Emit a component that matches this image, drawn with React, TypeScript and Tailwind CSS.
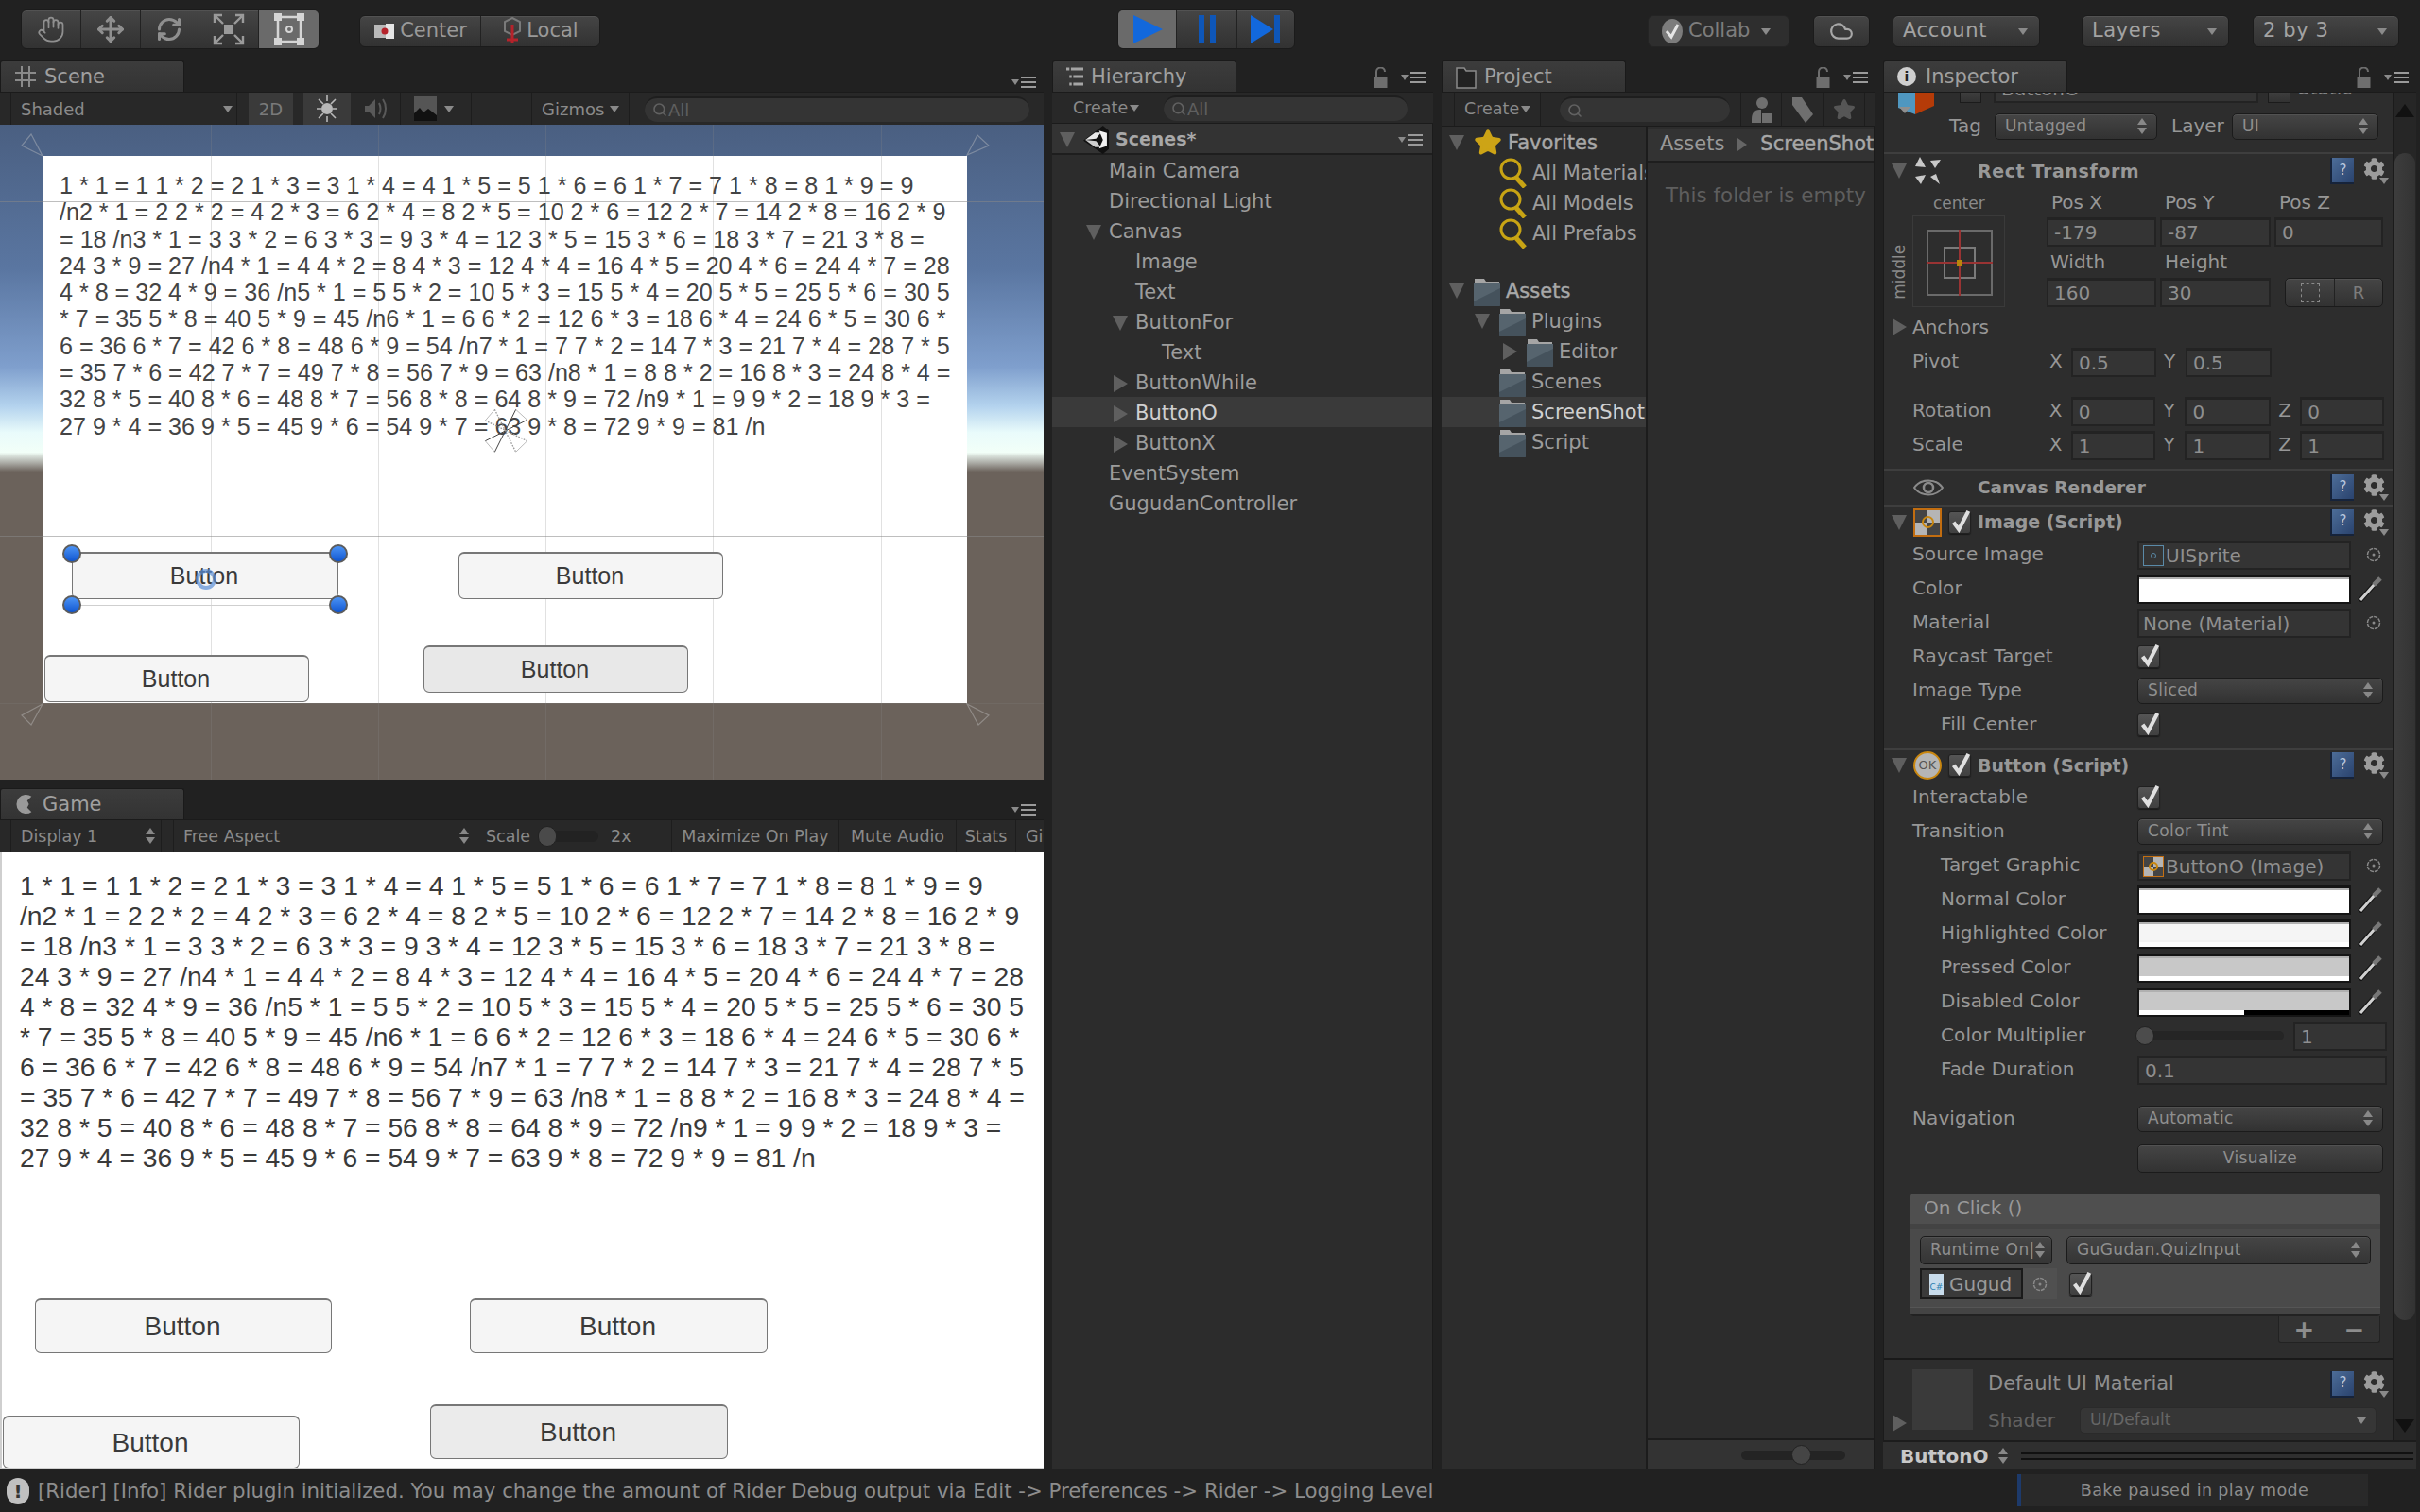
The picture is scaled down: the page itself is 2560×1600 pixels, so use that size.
import { ReactNode } from "react";
import { Cloud, Hand, Move, RefreshCw, Search, Star } from "lucide-react";
import { FaCog } from "react-icons/fa";

const LINES = [
  "1 * 1 = 1 1 * 2 = 2 1 * 3 = 3 1 * 4 = 4 1 * 5 = 5 1 * 6 = 6 1 * 7 = 7 1 * 8 = 8 1 * 9 = 9",
  "/n2 * 1 = 2 2 * 2 = 4 2 * 3 = 6 2 * 4 = 8 2 * 5 = 10 2 * 6 = 12 2 * 7 = 14 2 * 8 = 16 2 * 9",
  "= 18 /n3 * 1 = 3 3 * 2 = 6 3 * 3 = 9 3 * 4 = 12 3 * 5 = 15 3 * 6 = 18 3 * 7 = 21 3 * 8 =",
  "24 3 * 9 = 27 /n4 * 1 = 4 4 * 2 = 8 4 * 3 = 12 4 * 4 = 16 4 * 5 = 20 4 * 6 = 24 4 * 7 = 28",
  "4 * 8 = 32 4 * 9 = 36 /n5 * 1 = 5 5 * 2 = 10 5 * 3 = 15 5 * 4 = 20 5 * 5 = 25 5 * 6 = 30 5",
  "* 7 = 35 5 * 8 = 40 5 * 9 = 45 /n6 * 1 = 6 6 * 2 = 12 6 * 3 = 18 6 * 4 = 24 6 * 5 = 30 6 *",
  "6 = 36 6 * 7 = 42 6 * 8 = 48 6 * 9 = 54 /n7 * 1 = 7 7 * 2 = 14 7 * 3 = 21 7 * 4 = 28 7 * 5",
  "= 35 7 * 6 = 42 7 * 7 = 49 7 * 8 = 56 7 * 9 = 63 /n8 * 1 = 8 8 * 2 = 16 8 * 3 = 24 8 * 4 =",
  "32 8 * 5 = 40 8 * 6 = 48 8 * 7 = 56 8 * 8 = 64 8 * 9 = 72 /n9 * 1 = 9 9 * 2 = 18 9 * 3 =",
  "27 9 * 4 = 36 9 * 5 = 45 9 * 6 = 54 9 * 7 = 63 9 * 8 = 72 9 * 9 = 81 /n",
];

const btn = "bg-gradient-to-b from-[#454545] to-[#323232] border border-[#1b1b1b] shadow-[inset_0_1px_0_#525252]";
const field = "bg-[#343434] border-2 border-t-[3px] border-[#232323] text-[#8f8f8f] flex items-center";
const label = "text-[20px] text-[#979797] pb-[2px]";

function ArrowDown({ className = "" }: { className?: string }) {
  return (
    <svg width="16" height="18" viewBox="0 0 16 18" className={className}>
      <polygon points="0,1 16,1 8,17" fill="#5f5f5f" />
    </svg>
  );
}

function ArrowRight({ className = "" }: { className?: string }) {
  return (
    <svg width="16" height="20" viewBox="0 0 16 20" className={className}>
      <polygon points="1,1 16,10 1,19" fill="#5f5f5f" />
    </svg>
  );
}

function Caret() {
  return (
    <svg width="10" height="7" viewBox="0 0 10 7">
      <polygon points="0,0 10,0 5,7" fill="#8a8a8a" />
    </svg>
  );
}

function UpDown() {
  return (
    <svg width="10" height="18" viewBox="0 0 10 18" className="shrink-0">
      <polygon points="5,0 10,7 0,7" fill="#888" />
      <polygon points="0,10 10,10 5,17" fill="#888" />
    </svg>
  );
}

function MenuIcon() {
  return (
    <svg width="26" height="12" viewBox="0 0 26 12">
      <polygon points="0,3 8,3 4,9" fill="#8a8a8a" />
      <rect x="10" y="0" width="16" height="2" fill="#9a9a9a" />
      <rect x="10" y="5" width="16" height="2" fill="#9a9a9a" />
      <rect x="10" y="10" width="16" height="2" fill="#9a9a9a" />
    </svg>
  );
}

function LockIcon() {
  return (
    <svg width="15" height="22" viewBox="0 0 15 22">
      <path d="M3 10V5a4.5 4.5 0 0 1 9 0" fill="none" stroke="#6e6e6e" strokeWidth="2" />
      <rect x="0.5" y="10" width="14" height="12" fill="#6e6e6e" />
    </svg>
  );
}

function Folder({ className = "" }: { className?: string }) {
  return (
    <svg width="28" height="34" viewBox="0 0 28 34" className={className}>
      <path d="M1 4h10l2 3h14v5H1z" fill="#a5a5a5" />
      <rect x="0" y="9" width="28" height="25" rx="2" fill="#45525c" />
      <path d="M0 9h28v5L0 28z" fill="#56646e" />
    </svg>
  );
}

function GoldSearch() {
  return (
    <svg width="29" height="34" viewBox="0 0 29 34" className="shrink-0">
      <circle cx="12" cy="13" r="10" fill="none" stroke="#c8a414" strokeWidth="3" />
      <line x1="18" y1="22" x2="27" y2="32" stroke="#c8a414" strokeWidth="5" />
    </svg>
  );
}

function Unity() {
  return (
    <svg width="27" height="30" viewBox="0 0 26 46" preserveAspectRatio="none" className="shrink-0">
      <polygon points="20,0 26,8 26,38 20,46 0,24" fill="#111" />
      <polygon points="2,23 12,11 18,11 13,21" fill="#e8e8e8" />
      <polygon points="2,23 12,35 18,35 13,25" fill="#cfcfcf" />
      <polygon points="16,8 24,12 24,33 16,37 20,23" fill="#f2f2f2" />
    </svg>
  );
}

function Picker() {
  return (
    <svg width="26" height="28" viewBox="0 0 26 28" className="shrink-0">
      <line x1="2" y1="27" x2="18" y2="9" stroke="#111" strokeWidth="5" />
      <line x1="3" y1="26" x2="18" y2="9" stroke="#d0d0d0" strokeWidth="3" />
      <line x1="17" y1="10" x2="24" y2="3" stroke="#777" strokeWidth="5" />
    </svg>
  );
}

function Target() {
  return (
    <svg width="16" height="16" viewBox="0 0 16 16" className="shrink-0">
      <circle cx="8" cy="8" r="6.5" fill="none" stroke="#8a8a8a" strokeWidth="1.5" strokeDasharray="4 1" />
      <circle cx="8" cy="8" r="1.5" fill="#8a8a8a" />
    </svg>
  );
}

function Check({ className = "" }: { className?: string }) {
  return (
    <div className={`bg-gradient-to-b from-[#555] to-[#404040] border border-[#202020] shadow-[0_1px_1px_#1a1a1a] w-[24px] h-[24px] rounded-[3px] relative shrink-0 ${className}`}>
      <svg width="24" height="26" viewBox="0 0 26 28" className="absolute -top-[4px] left-0">
        <path d="M5 16l6 8L22 3" fill="none" stroke="#e0e0e0" strokeWidth="4.5" />
      </svg>
    </div>
  );
}

function CompIcons() {
  return (
    <div className="ml-auto flex items-center gap-[10px]">
      <div className="w-[25px] h-[28px] bg-gradient-to-br from-[#4d6d98] to-[#2a436e] border-l-2 border-b-2 border-[#16233a] text-[#b9c8de] text-[15px] flex items-center justify-center">?</div>
      <div className="relative w-[27px] h-[28px]">
        <FaCog size={23} color="#9c9c9c" />
        <span className="absolute right-0 bottom-0"><Caret /></span>
      </div>
    </div>
  );
}

function CheckerIcon({ size }: { size: "big" | "small" }) {
  return (
    <div className={`relative shrink-0 grid grid-cols-2 border-orange-400/70 ${size === "big" ? "w-[30px] h-[30px] border-2" : "w-[22px] h-[22px] border"}`}>
      <div className="bg-[#444]" />
      <div className="bg-[#b5b5b5]" />
      <div className="bg-[#b5b5b5]" />
      <div className="bg-[#444]" />
      <div className={`absolute inset-0 m-auto rounded-full border-2 border-[#c98710] ${size === "big" ? "w-[13px] h-[13px]" : "w-[10px] h-[10px]"}`} />
    </div>
  );
}

function TabStrip({ label, icon, width, extra }: { label: string; icon: ReactNode; width: string; extra?: ReactNode }) {
  return (
    <div className="h-[33px] flex items-end justify-between shrink-0">
      <div className={`${width} h-[33px] bg-gradient-to-b from-[#3c3c3c] to-[#333] border-t border-x border-[#1a1a1a] rounded-t-[3px] flex items-center pl-[14px] gap-[8px] text-[21px] text-[#a0a0a0]`}>
        {icon}
        <span className="pt-[2px]">{label}</span>
      </div>
      <div className="flex items-center gap-[14px] pr-[8px] pb-[4px]">
        {extra}
        <MenuIcon />
      </div>
    </div>
  );
}

function ToolButton({ children, active }: { children: ReactNode; active?: boolean }) {
  return (
    <div className={`w-[63px] h-full flex items-center justify-center border-r border-[#222] last:border-r-0 ${active ? "bg-[#6a6a6a]" : ""}`}>
      {children}
    </div>
  );
}

function TopDrop({ label, width, margin }: { label: string; width: string; margin: string }) {
  return (
    <div className={`${btn} ${width} ${margin} h-[34px] rounded-[6px] flex items-center justify-between pl-[10px] pr-[12px] text-[21px] text-[#a3a3a3] tracking-[0.6px]`}>
      <span>{label}</span>
      <Caret />
    </div>
  );
}

function Toolbar() {
  return (
    <div className="h-[64px] shrink-0 flex items-start bg-[#212121]">
      <div className={`${btn} ml-[22px] mt-[10px] w-[316px] h-[42px] rounded-[6px] flex overflow-hidden`}>
        <ToolButton><Hand size={30} strokeWidth={1.4} color="#8f8f8f" /></ToolButton>
        <ToolButton><Move size={30} strokeWidth={2.4} color="#8f8f8f" /></ToolButton>
        <ToolButton><RefreshCw size={28} strokeWidth={2.6} color="#8f8f8f" /></ToolButton>
        <ToolButton>
          <svg width="34" height="34" viewBox="0 0 34 34">
            <rect x="12" y="12" width="10" height="10" fill="#9a9a9a" />
            <path d="M2 10V2h8M24 2h8v8M32 24v8h-8M10 32H2v-8M3 3l8 8M31 3l-8 8M31 31l-8-8M3 31l8-8" fill="none" stroke="#9a9a9a" strokeWidth="2.4" />
          </svg>
        </ToolButton>
        <ToolButton active>
          <svg width="36" height="36" viewBox="0 0 36 36">
            <rect x="6" y="5" width="24" height="26" fill="none" stroke="#d5d5d5" strokeWidth="2.5" />
            <rect x="2" y="1" width="8" height="8" fill="#d5d5d5" />
            <rect x="26" y="1" width="8" height="8" fill="#d5d5d5" />
            <rect x="2" y="27" width="8" height="8" fill="#d5d5d5" />
            <rect x="26" y="27" width="8" height="8" fill="#d5d5d5" />
            <circle cx="18" cy="18" r="3" fill="none" stroke="#d5d5d5" strokeWidth="2" />
          </svg>
        </ToolButton>
      </div>
      <div className={`${btn} ml-[42px] mt-[16px] w-[255px] h-[34px] rounded-[6px] flex text-[21px] text-[#999]`}>
        <div className="w-[128px] flex items-center justify-center gap-[4px] border-r border-[#222]">
          <svg width="24" height="18" viewBox="0 0 24 18">
            <rect x="1" y="2" width="12" height="14" fill="#b9b9b9" />
            <rect x="13" y="1" width="9" height="16" fill="#e6e6e6" />
            <circle cx="12" cy="9" r="3.5" fill="#b5232b" />
          </svg>
          <span>Center</span>
        </div>
        <div className="flex-1 flex items-center justify-center gap-[4px]">
          <svg width="22" height="30" viewBox="0 0 22 30">
            <polygon points="11,1 19,5 19,15 11,19 3,15 3,5" fill="none" stroke="#7a7a7a" strokeWidth="2" />
            <line x1="11" y1="8" x2="11" y2="27" stroke="#b5232b" strokeWidth="3" />
            <line x1="5" y1="24" x2="17" y2="24" stroke="#b5232b" strokeWidth="3" />
          </svg>
          <span>Local</span>
        </div>
      </div>
      <div className={`${btn} ml-[547px] mt-[10px] w-[188px] h-[42px] rounded-[6px] flex overflow-hidden`}>
        <div className="w-[62px] bg-[#6a6a6a] border-r border-[#222] flex items-center justify-center">
          <svg width="32" height="30" viewBox="0 0 32 30"><polygon points="1,0 32,15 1,30" fill="#1268dc" /></svg>
        </div>
        <div className="w-[64px] border-r border-[#222] flex items-center justify-center gap-[6px]">
          <div className="w-[6px] h-[30px] bg-[#0e56b8]" />
          <div className="w-[6px] h-[30px] bg-[#0e56b8]" />
        </div>
        <div className="flex-1 flex items-center justify-center">
          <svg width="32" height="30" viewBox="0 0 32 30">
            <polygon points="0,0 24,15 0,30" fill="#1268dc" />
            <rect x="25" y="0" width="6" height="30" fill="#0e56b8" />
          </svg>
        </div>
      </div>
      <div className="ml-[373px] mt-[16px] w-[150px] h-[34px] rounded-[6px] bg-[#2e2e2e] border border-[#242424] flex items-center pl-[14px] gap-[6px] text-[21px] text-[#7d7d7d]">
        <svg width="22" height="26" viewBox="0 0 22 26">
          <ellipse cx="11" cy="13" rx="11" ry="13" fill="#7c7c7c" />
          <path d="M5 13l5 6 7-13" fill="none" stroke="#e5e5e5" strokeWidth="3" />
        </svg>
        <span>Collab</span>
        <span className="ml-[6px]"><Caret /></span>
      </div>
      <div className={`${btn} ml-[25px] mt-[16px] w-[60px] h-[34px] rounded-[6px] flex items-center justify-center`}>
        <Cloud size={26} strokeWidth={2} color="#a8a8a8" />
      </div>
      <TopDrop label="Account" width="w-[156px]" margin="ml-[24px] mt-[16px]" />
      <TopDrop label="Layers" width="w-[156px]" margin="ml-[44px] mt-[16px]" />
      <TopDrop label="2 by 3" width="w-[155px]" margin="ml-[25px] mt-[16px]" />
    </div>
  );
}

function SearchPill({ label, width }: { label: string; width: string }) {
  return (
    <div className={`${width} h-[27px] rounded-full bg-[#343434] border-t-2 border-[#1e1e1e] flex items-center pl-[8px] gap-[1px] text-[18px] text-[#5f5f5f]`}>
      <Search size={16} color="#616161" strokeWidth={2.4} />
      {label && <span>{label}</span>}
    </div>
  );
}

function BigText({ size }: { size: "scene" | "game" }) {
  return (
    <div className={`font-['Liberation_Sans',Arial,sans-serif] whitespace-nowrap ${size === "scene" ? "text-[25.1px] leading-[28.3px] text-[#444]" : "text-[28.3px] leading-[32px] text-[#3a3a3a]"}`}>
      {LINES.map((l) => <div key={l}>{l}</div>)}
    </div>
  );
}

function UiButton({ className }: { className: string }) {
  return (
    <div className={`absolute border border-[#777] border-t-2 rounded-[6px] flex items-center justify-center font-['Liberation_Sans',Arial,sans-serif] text-[#3a3a3a] pr-[2px] ${className}`}>
      Button
    </div>
  );
}

function Corner({ className, points }: { className: string; points: string }) {
  return (
    <svg width="27" height="26" viewBox="0 0 27 26" className={`absolute ${className}`}>
      <polygon points={points} fill="none" stroke="#c8c8c8" strokeOpacity="0.4" strokeWidth="1.2" />
    </svg>
  );
}

function Handle({ className }: { className: string }) {
  return <div className={`absolute w-[20px] h-[20px] rounded-full bg-gradient-to-b from-[#4b93f5] to-[#0f55d0] border-2 border-[#5c5c5c] ${className}`} />;
}

function SceneView() {
  return (
    <div className="relative h-[693px] overflow-hidden bg-[linear-gradient(to_bottom,#4a5f81_0%,#5a76a1_22%,#7f9fcd_37%,#b4d3ee_43%,#e9fbfb_47%,#f2fff8_50%,#a8a8a2_51.7%,#6b625b_53%,#6b625b_100%)]">
      <div className="absolute left-[45px] top-[33px] w-[978px] h-[579px] bg-white" />
      {[45, 223, 400, 577, 754, 932].map((x) => (
        <div key={x} className="absolute top-0 bottom-0 w-px bg-[#888]/25" style={{ left: x }} />
      ))}
      {[81, 435].map((y) => (
        <div key={y} className="absolute left-0 right-0 h-px bg-[#888]/55" style={{ top: y }} />
      ))}
      {[258, 612].map((y) => (
        <div key={y} className="absolute left-0 right-0 h-px bg-[#888]/20" style={{ top: y }} />
      ))}
      <div className="absolute left-[63px] top-[50px]"><BigText size="scene" /></div>
      <UiButton className="left-[76px] top-[452px] w-[282px] h-[50px] text-[25px] bg-[#f5f5f5]" />
      <UiButton className="left-[485px] top-[452px] w-[280px] h-[50px] text-[25px] bg-[#f5f5f5]" />
      <UiButton className="left-[47px] top-[561px] w-[280px] h-[50px] text-[25px] bg-[#f5f5f5]" />
      <UiButton className="left-[448px] top-[551px] w-[280px] h-[50px] text-[25px] bg-[#e8e8e8]" />
      <div className="absolute left-[76px] top-[508px] w-[282px] h-[1px] bg-[#cfcfcf]" />
      <Handle className="left-[66px] top-[444px]" />
      <Handle className="left-[348px] top-[444px]" />
      <Handle className="left-[66px] top-[498px]" />
      <Handle className="left-[348px] top-[498px]" />
      <div className="absolute left-[207px] top-[470px] w-[22px] h-[22px] rounded-full border-[4px] border-[#5b8fd6]/70" />
      <svg width="120" height="80" viewBox="0 0 360 240" className="absolute left-[480px] top-[278px]">
        <path d="M100 170L233 103M130 205L197 70" stroke="#444" strokeWidth="3" />
        <path d="M100 105L233 170M130 70L197 205" stroke="#9a9a9a" strokeWidth="4" strokeDasharray="5 4" />
        <path d="M130 70L100 105M197 70L233 103M100 170L130 205M197 205L233 170" stroke="#777" strokeWidth="1.5" />
      </svg>
      <Corner className="left-[22px] top-[9px]" points="11,1 1,13 23,24" />
      <Corner className="left-[1021px] top-[9px]" points="2,23 13,2 25,13" />
      <Corner className="left-[22px] top-[611px]" points="23,2 1,14 11,24" />
      <Corner className="left-[1021px] top-[611px]" points="2,2 25,14 14,24" />
    </div>
  );
}

function GameView() {
  return (
    <div className="relative flex-1 bg-white border-l-2 border-b-2 border-[#cfcfcf] pl-[19px] pt-[19px] overflow-hidden">
      <BigText size="game" />
      <UiButton className="left-[35px] top-[472px] w-[314px] h-[58px] text-[28px] bg-[#f5f5f5]" />
      <UiButton className="left-[495px] top-[472px] w-[315px] h-[58px] text-[28px] bg-[#f5f5f5]" />
      <UiButton className="left-[1px] top-[596px] w-[314px] h-[56px] text-[28px] bg-[#f5f5f5]" />
      <UiButton className="left-[453px] top-[584px] w-[315px] h-[58px] text-[28px] bg-[#ebebeb]" />
    </div>
  );
}

function LeftColumn() {
  return (
    <div className="w-[1104px] shrink-0 flex flex-col">
      <TabStrip
        label="Scene"
        width="w-[195px]"
        icon={
          <svg width="24" height="24" viewBox="0 0 24 24">
            <path d="M8 1v22M16 1v22M1 8h22M1 16h22" stroke="#8a8a8a" strokeWidth="2" />
          </svg>
        }
      />
      <div className="h-[35px] shrink-0 bg-[#282828] border-t border-[#1b1b1b] flex items-center text-[18px] text-[#8a8a8a]">
        <div className="ml-[11px] w-[240px] h-full border-x border-[#1d1d1d] flex items-center justify-between pl-[10px] pr-[4px]"><span>Shaded</span><Caret /></div>
        <div className="ml-[12px] w-[47px] h-full bg-[#3a3a3a] flex items-center justify-center text-[#7a7a7a]">2D</div>
        <div className="ml-[11px] w-[50px] h-full bg-[#3a3a3a] flex items-center justify-center">
          <svg width="26" height="30" viewBox="0 0 26 30">
            <circle cx="13" cy="15" r="6" fill="#b8b8b8" />
            <path d="M13 1v6M13 23v6M2 15h5M19 15h5M4 5l5 5M22 5l-5 5M4 25l5-5M22 25l-5-5" stroke="#b8b8b8" strokeWidth="1.6" />
          </svg>
        </div>
        <div className="w-[53px] h-full flex items-center justify-center border-r border-[#1d1d1d]">
          <svg width="26" height="28" viewBox="0 0 26 28">
            <path d="M2 11h4l7-7v20l-7-7H2z" fill="#595959" />
            <path d="M17 8c2 4 2 8 0 12M21 4c4 6 4 14 0 20" fill="none" stroke="#595959" strokeWidth="2" />
          </svg>
        </div>
        <div className="w-[75px] h-full flex items-center gap-[8px] pl-[14px] border-r border-[#1d1d1d]">
          <svg width="24" height="26" viewBox="0 0 24 26">
            <rect width="24" height="26" fill="#555" />
            <path d="M0 26V18l6-6 4 5 5-4 9 7v6z" fill="#111" />
          </svg>
          <Caret />
        </div>
        <div className="ml-[63px] w-[104px] h-full flex items-center justify-between px-[10px] border-x border-[#1d1d1d]"><span>Gizmos</span><Caret /></div>
        <div className="ml-[16px]"><SearchPill label="All" width="w-[407px]" /></div>
      </div>
      <SceneView />
      <div className="h-[9px] shrink-0" />
      <TabStrip
        label="Game"
        width="w-[195px]"
        icon={
          <svg width="22" height="24" viewBox="0 0 24 24">
            <path d="M20 3a11 11 0 1 0 0 18l-5-5 2-4-2-4z" fill="#9a9a9a" />
          </svg>
        }
      />
      <div className="h-[35px] shrink-0 bg-[#282828] border-t border-[#1b1b1b] flex items-center text-[17.5px] text-[#8a8a8a]">
        <div className="ml-[11px] w-[160px] h-full border-x border-[#1d1d1d] flex items-center justify-between pl-[10px] pr-[6px]"><span>Display 1</span><UpDown /></div>
        <div className="ml-[12px] w-[320px] h-full border-x border-[#1d1d1d] flex items-center justify-between pl-[10px] pr-[6px]"><span>Free Aspect</span><UpDown /></div>
        <div className="w-[207px] h-full flex items-center pl-[11px]">
          <span>Scale</span>
          <div className="relative ml-[10px] w-[62px] h-[12px] rounded-full bg-[#222]">
            <div className="absolute -left-[2px] -top-[5px] w-[20px] h-[22px] rounded-full bg-[#4a4a4a] border border-[#222]" />
          </div>
          <span className="ml-[13px]">2x</span>
        </div>
        <div className="w-[178px] h-full flex items-center justify-center border-x border-[#1d1d1d]">Maximize On Play</div>
        <div className="w-[124px] h-full flex items-center justify-center border-r border-[#1d1d1d]">Mute Audio</div>
        <div className="w-[63px] h-full flex items-center justify-center border-r border-[#1d1d1d]">Stats</div>
        <div className="flex-1 pl-[10px] overflow-hidden">Gi</div>
      </div>
      <GameView />
    </div>
  );
}

const HIER = [
  { name: "Main Camera", pad: "pl-[60px]" },
  { name: "Directional Light", pad: "pl-[60px]" },
  { name: "Canvas", pad: "pl-[60px]", arrow: "down" },
  { name: "Image", pad: "pl-[88px]" },
  { name: "Text", pad: "pl-[88px]" },
  { name: "ButtonFor", pad: "pl-[88px]", arrow: "down" },
  { name: "Text", pad: "pl-[116px]" },
  { name: "ButtonWhile", pad: "pl-[88px]", arrow: "right" },
  { name: "ButtonO", pad: "pl-[88px]", arrow: "right", active: true },
  { name: "ButtonX", pad: "pl-[88px]", arrow: "right" },
  { name: "EventSystem", pad: "pl-[60px]" },
  { name: "GugudanController", pad: "pl-[60px]" },
];

function Hierarchy() {
  return (
    <div className="w-[403px] ml-[9px] shrink-0 flex flex-col">
      <TabStrip
        label="Hierarchy"
        width="w-[195px]"
        extra={<LockIcon />}
        icon={
          <svg width="18" height="20" viewBox="0 0 22 20" preserveAspectRatio="none">
            <path d="M0 2h4M6 2h16M4 10h3M9 10h13M4 18h3M9 18h13" stroke="#a5a5a5" strokeWidth="3" />
          </svg>
        }
      />
      <div className="h-[34px] shrink-0 bg-[#282828] border-y border-[#1b1b1b] flex items-center text-[17.5px] text-[#8a8a8a]">
        <div className="ml-[11px] w-[92px] h-full flex items-center justify-between px-[10px] border-x border-[#1d1d1d]"><span>Create</span><Caret /></div>
        <div className="ml-[15px]"><SearchPill label="All" width="w-[258px]" /></div>
      </div>
      <div className="flex-1 bg-[#2c2c2c] border-r border-[#1b1b1b]">
        <div className="h-[33px] bg-[#333] border-b-2 border-[#1e1e1e] flex items-center pl-[8px] pt-[2px] text-[19px] text-[#a8a8a8]">
          <ArrowDown />
          <span className="ml-[9px]"><Unity /></span>
          <span className="ml-[7px] font-bold">Scenes*</span>
          <span className="ml-auto mr-[10px]"><MenuIcon /></span>
        </div>
        {HIER.map((r, i) => (
          <div key={i} className={`h-[32px] pt-[3px] flex items-center relative text-[21px] ${r.pad} ${r.active ? "bg-[#3a3a3a] text-[#d0d0d0]" : "text-[#9c9c9c]"}`}>
            {r.arrow === "down" && <ArrowDown className="-ml-[24px] mr-[8px]" />}
            {r.arrow === "right" && <ArrowRight className="-ml-[24px] mr-[8px]" />}
            {r.name}
          </div>
        ))}
      </div>
    </div>
  );
}

function TreeRow({ name, pad, icon, arrow, bold, active }: { name: string; pad: string; icon: ReactNode; arrow?: "down" | "right"; bold?: boolean; active?: boolean }) {
  return (
    <div className={`h-[32px] flex items-center text-[21px] whitespace-nowrap overflow-hidden ${pad} ${active ? "bg-[#3a3a3a] text-[#d0d0d0]" : "text-[#9c9c9c]"} ${bold ? "[-webkit-text-stroke:0.4px_#a8a8a8] text-[#a8a8a8]" : ""}`}>
      {arrow === "down" && <ArrowDown className="mr-[10px] shrink-0" />}
      {arrow === "right" && <ArrowRight className="mr-[10px] shrink-0" />}
      {icon}
      <span className="ml-[6px] pt-[2px]">{name}</span>
    </div>
  );
}

function Project() {
  return (
    <div className="w-[459px] ml-[9px] shrink-0 flex flex-col">
      <TabStrip
        label="Project"
        width="w-[195px]"
        extra={<LockIcon />}
        icon={
          <svg width="22" height="26" viewBox="0 0 22 26">
            <path d="M1 4h8l2 3h10v18H1z" fill="#222" stroke="#8a8a8a" strokeWidth="1.5" />
          </svg>
        }
      />
      <div className="h-[37px] shrink-0 bg-[#282828] border-y border-[#1b1b1b] flex items-center text-[17.5px] text-[#8a8a8a]">
        <div className="ml-[13px] w-[92px] h-full flex items-center justify-between px-[10px] border-x border-[#1d1d1d]"><span>Create</span><Caret /></div>
        <div className="ml-[20px]"><SearchPill label="" width="w-[180px]" /></div>
        <div className="ml-[11px] w-[44px] h-full flex items-center justify-center border-x border-[#1d1d1d]">
          <svg width="24" height="28" viewBox="0 0 24 28"><circle cx="13" cy="7" r="6" fill="#6f6f6f" /><path d="M2 24c0-9 5-10 10-10v14H2z" fill="#6f6f6f" /><rect x="13" y="18" width="10" height="10" fill="#6f6f6f" /></svg>
        </div>
        <div className="w-[44px] h-full flex items-center justify-center border-r border-[#1d1d1d]">
          <svg width="24" height="30" viewBox="0 0 24 30"><path d="M1 2h10l12 18-8 9L1 10z" fill="#6f6f6f" /></svg>
        </div>
        <div className="w-[44px] h-full flex items-center justify-center border-r border-[#1d1d1d]">
          <Star size={24} fill="#565656" color="#565656" />
        </div>
      </div>
      <div className="flex-1 flex bg-[#2c2c2c] border-r-2 border-[#1b1b1b] min-h-0">
        <div className="w-[218px] shrink-0 border-r-2 border-[#1c1c1c] pt-[1px] overflow-hidden">
          <TreeRow name="Favorites" pad="pl-[8px]" arrow="down" bold icon={<Star size={30} fill="#cda416" color="#cda416" className="shrink-0" />} />
          <TreeRow name="All Materials" pad="pl-[61px]" icon={<GoldSearch />} />
          <TreeRow name="All Models" pad="pl-[61px]" icon={<GoldSearch />} />
          <TreeRow name="All Prefabs" pad="pl-[61px]" icon={<GoldSearch />} />
          <div className="h-[29px]" />
          <TreeRow name="Assets" pad="pl-[8px]" arrow="down" bold icon={<Folder className="shrink-0" />} />
          <TreeRow name="Plugins" pad="pl-[35px]" arrow="down" icon={<Folder className="shrink-0" />} />
          <TreeRow name="Editor" pad="pl-[64px]" arrow="right" icon={<Folder className="shrink-0" />} />
          <TreeRow name="Scenes" pad="pl-[61px]" icon={<Folder className="shrink-0" />} />
          <TreeRow name="ScreenShot" pad="pl-[61px]" active icon={<Folder className="shrink-0" />} />
          <TreeRow name="Script" pad="pl-[61px]" icon={<Folder className="shrink-0" />} />
        </div>
        <div className="flex-1 flex flex-col min-w-0">
          <div className="h-[36px] mt-[2px] shrink-0 bg-[#333] border-b-2 border-[#1e1e1e] flex items-center pl-[13px] gap-[14px] text-[21px] text-[#999] whitespace-nowrap overflow-hidden">
            <span>Assets</span>
            <svg width="10" height="14" viewBox="0 0 10 14" className="shrink-0"><polygon points="0,0 10,7 0,14" fill="#666" /></svg>
            <span className="text-[#a8a8a8] [-webkit-text-stroke:0.4px_#a8a8a8]">ScreenShot</span>
          </div>
          <div className="flex-1 pl-[19px] pt-[19px] text-[21.4px] text-[#5e5e5e] whitespace-nowrap overflow-hidden">This folder is empty</div>
          <div className="h-[33px] shrink-0 bg-[#333] border-t-2 border-[#1c1c1c] pl-[99px] flex items-center">
            <div className="relative w-[110px] h-[10px] rounded-full bg-[#242424]">
              <div className="absolute left-[53px] -top-[6px] w-[21px] h-[21px] rounded-full bg-[#454545] border border-[#222]" />
            </div>
          </div>
        </div>
      </div>
    </div>
  );
}

function Dropdown({ label, className = "" }: { label: string; className?: string }) {
  return (
    <div className={`${btn} h-[28px] rounded-[5px] flex items-center justify-between pl-[10px] pr-[10px] text-[17px] text-[#8f8f8f] tracking-[0.4px] whitespace-nowrap overflow-hidden ${className}`}>
      <span>{label}</span>
      <UpDown />
    </div>
  );
}

function Row({ label: text, indent, children, className = "" }: { label: string; indent?: boolean; children?: ReactNode; className?: string }) {
  return (
    <div className={`h-[36px] shrink-0 flex items-center ${className}`}>
      <div className={`w-[268px] shrink-0 ${label} tracking-[0.1px] whitespace-nowrap ${indent ? "pl-[60px]" : "pl-[30px]"}`}>{text}</div>
      {children}
    </div>
  );
}

function ObjField({ label, icon }: { label: string; icon?: ReactNode }) {
  return (
    <>
      <div className={`${field} w-[226px] h-[31px] pl-[4px] gap-[2px] text-[20px] whitespace-nowrap overflow-hidden`}>
        {icon}
        <span>{label}</span>
      </div>
      <span className="ml-[16px]"><Target /></span>
    </>
  );
}

function ColorField({ fill, bottom }: { fill: string; bottom?: ReactNode }) {
  return (
    <>
      <div className={`w-[226px] h-[31px] border-2 border-t-[3px] border-[#151515] relative overflow-hidden ${fill}`}>
        <div className="absolute top-0 left-0 right-0 h-[2px] bg-[#b0b0b0]" />
        {bottom ?? <div className="absolute bottom-0 left-0 right-0 h-[5px] bg-white" />}
      </div>
      <span className="ml-[7px]"><Picker /></span>
    </>
  );
}

function Num({ value, className }: { value: string; className: string }) {
  return <div className={`${field} ${className} h-[31px] pl-[6px] text-[20px]`}>{value}</div>;
}

function Axis({ label: text, value, className }: { label: string; value: string; className: string }) {
  return (
    <div className={`flex items-center ${className}`}>
      <span className={`w-[26px] pl-[3px] ${label}`}>{text}</span>
      <Num value={value} className="flex-1" />
    </div>
  );
}

function CompHeader({ title, icon, check, className = "", titleClass = "" }: { title: string; icon: ReactNode; check?: boolean; className?: string; titleClass?: string }) {
  return (
    <div className={`flex items-center pl-[8px] pr-[4px] shrink-0 ${className}`}>
      <ArrowDown className="mr-[7px] shrink-0" />
      <div className="w-[30px] shrink-0 flex justify-center">{icon}</div>
      {check && <Check className="ml-[7px]" />}
      <span className={`${check ? "ml-[7px]" : "ml-[38px]"} text-[19px] font-bold text-[#989898] whitespace-nowrap ${titleClass}`}>{title}</span>
      <CompIcons />
    </div>
  );
}

function Divider() {
  return <div className="h-[2px] shrink-0 bg-[#3e3e3e]" />;
}

function RectTransform() {
  return (
    <>
      <CompHeader
        title="Rect Transform"
        titleClass="tracking-[0.6px]"
        className="h-[36px]"
        icon={
          <svg width="30" height="32" viewBox="0 0 30 30">
            <path d="M7 0L2 10L13 11zM29 3L18 4L23 12zM2 21L13 19L8 29zM18 21L24 18L28 29z" fill="#c8c8c8" />
          </svg>
        }
      />
      <div className="flex h-[128px] shrink-0">
        <div className="relative w-[172px] shrink-0">
          <div className="pl-[52px] pt-[4px] h-[29px] text-[17px] text-[#8a8a8a]">center</div>
          <div className="relative ml-[30px] w-[98px] h-[97px] border border-[#3a3a3a]">
            <div className="absolute left-[14px] top-[14px] w-[70px] h-[70px] border-2 border-[#6a6a6a]" />
            <div className="absolute left-[32px] top-[32px] w-[34px] h-[34px] border-2 border-[#7a7a7a]" />
            <div className="absolute left-[48px] top-[14px] w-[2px] h-[70px] bg-[#933]" />
            <div className="absolute left-[14px] top-[48px] w-[70px] h-[2px] bg-[#933]" />
            <div className="absolute left-[46px] top-[46px] w-[6px] h-[6px] bg-[#b8860b]" />
          </div>
          <div className="absolute left-[17px] top-[76px] -rotate-90 origin-center -translate-x-1/2 text-[17px] text-[#8a8a8a]">middle</div>
        </div>
        <div className="flex-1 pr-[9px] text-[20px] text-[#979797]">
          <div className="grid grid-cols-[116px_117px_115px] gap-x-[4px]">
            <div className="h-[31px] pl-[5px] pb-[2px] flex items-center">Pos X</div>
            <div className="h-[31px] pl-[5px] pb-[2px] flex items-center">Pos Y</div>
            <div className="h-[31px] pl-[5px] pb-[2px] flex items-center">Pos Z</div>
            <Num value="-179" className="" />
            <Num value="-87" className="" />
            <Num value="0" className="" />
            <div className="h-[33px] pl-[4px] pb-[2px] flex items-center">Width</div>
            <div className="h-[33px] pl-[5px] pb-[2px] flex items-center">Height</div>
            <div />
            <Num value="160" className="" />
            <Num value="30" className="" />
            <div className={`${btn} h-[31px] ml-[11px] rounded-[5px] flex text-[#7c7c7c]`}>
              <div className="w-[52px] border-r border-[#222] flex items-center justify-center">
                <div className="w-[20px] h-[20px] border border-dashed border-[#8a8a8a]" />
              </div>
              <div className="flex-1 flex items-center justify-center text-[18px]">R</div>
            </div>
          </div>
        </div>
      </div>
      <div className={`h-[36px] mt-[2px] shrink-0 flex items-center pl-[8px] ${label}`}>
        <ArrowRight className="mr-[6px]" />
        Anchors
      </div>
      <div className="h-[36px] shrink-0 flex items-center pr-[9px]">
        <div className={`w-[172px] pl-[30px] ${label}`}>Pivot</div>
        <Axis label="X" value="0.5" className="w-[116px]" />
        <Axis label="Y" value="0.5" className="w-[117px] ml-[5px]" />
      </div>
      <div className="h-[16px] shrink-0" />
      <div className="h-[36px] shrink-0 flex items-center pr-[9px]">
        <div className={`w-[172px] pl-[30px] ${label}`}>Rotation</div>
        <Axis label="X" value="0" className="w-[116px]" />
        <Axis label="Y" value="0" className="w-[117px] ml-[5px]" />
        <Axis label="Z" value="0" className="w-[115px] ml-[5px]" />
      </div>
      <div className="h-[36px] shrink-0 flex items-center pr-[9px]">
        <div className={`w-[172px] pl-[30px] ${label}`}>Scale</div>
        <Axis label="X" value="1" className="w-[116px]" />
        <Axis label="Y" value="1" className="w-[117px] ml-[5px]" />
        <Axis label="Z" value="1" className="w-[115px] ml-[5px]" />
      </div>
      <div className="h-[7px] shrink-0" />
    </>
  );
}

function OnClick() {
  return (
    <div className="ml-[28px] mr-[13px] mt-[22px] shrink-0">
      <div className="border-b-2 border-[#222] rounded-[4px] overflow-hidden bg-[#4a4a4a]">
        <div className="h-[32px] bg-[#4f4f4f] pl-[14px] pb-[2px] flex items-center text-[20px] text-[#999]">On Click ()</div>
        <div className="h-[6px] bg-[#434343]" />
        <div className="h-[82px] pl-[10px] pt-[7px]">
          <div className="flex gap-[15px]">
            <Dropdown label="Runtime On|" className="w-[140px] !h-[30px] from-[#404040] to-[#353535]" />
            <Dropdown label="GuGudan.QuizInput" className="w-[322px] !h-[30px] from-[#404040] to-[#353535]" />
          </div>
          <div className="flex items-center mt-[4px]">
            <div className="w-[109px] h-[33px] bg-[#3a3a3a] border-2 border-[#1a1a1a] flex items-center pl-[8px] gap-[6px] text-[20px] text-[#9a9a9a]">
              <div className="w-[15px] h-[22px] bg-[#c8dcec] text-[9px] text-[#2a7fb0] flex items-end justify-center">C#</div>
              Gugud
            </div>
            <div className="w-[36px] h-[33px] bg-[#505050] flex items-center justify-center"><Target /></div>
            <Check className="ml-[13px]" />
          </div>
        </div>
        <div className="h-[8px] bg-[#444] border-t border-[#555]" />
      </div>
      <div className="ml-auto w-[108px] h-[28px] bg-[#333] border-x border-b border-[#222] rounded-b-[3px] flex items-center justify-around text-[26px] font-bold text-[#8d8d8d] leading-none">
        <span>+</span>
        <span>−</span>
      </div>
    </div>
  );
}

function Inspector() {
  return (
    <div className="w-[564px] ml-[8px] shrink-0 flex flex-col">
      <TabStrip
        label="Inspector"
        width="w-[195px]"
        extra={<LockIcon />}
        icon={
          <div className="w-[20px] h-[20px] rounded-full bg-[#cfcfcf] text-[#222] text-[14px] font-bold flex items-center justify-center mr-[2px]">i</div>
        }
      />
      <div className="flex-1 min-h-0 flex border-t border-[#1b1b1b]">
        <div className="w-[539px] shrink-0 flex flex-col bg-[#2d2d2d] border-l border-[#1b1b1b] overflow-hidden">
          <div className="relative h-[63px] shrink-0">
            <svg width="40" height="24" viewBox="0 0 40 24" className="absolute left-[14px] top-0">
              <polygon points="1,0 19,0 19,23 1,16" fill="#4f97c0" />
              <polygon points="19,0 39,0 39,14 19,23" fill="#b53b08" />
              <polygon points="2,15 14,15 8,22" fill="#8f8f8f" />
            </svg>
            <div className="flex h-[11px] items-end pl-[80px] overflow-hidden">
              <div className={`${btn} w-[23px] h-[18px] shrink-0`} />
              <div className={`${field} ml-[13px] w-[280px] h-[18px] text-[20px] pl-[6px] shrink-0 overflow-hidden`}><span className="-mt-[14px]">ButtonO</span></div>
              <div className={`${btn} ml-[10px] w-[24px] h-[18px] shrink-0`} />
              <span className="ml-[8px] h-[18px] text-[20px] leading-[5px] text-[#8a8a8a]">Static</span>
            </div>
            <div className="flex items-center h-[28px] mt-[11px] pl-[69px]">
              <span className={`w-[48px] ${label}`}>Tag</span>
              <Dropdown label="Untagged" className="w-[172px]" />
              <span className={`ml-[15px] w-[64px] ${label}`}>Layer</span>
              <Dropdown label="UI" className="w-[155px]" />
            </div>
          </div>
          <Divider />
          <RectTransform />
          <Divider />
          <div className="h-[36px] shrink-0 flex items-center pl-[31px] pr-[4px]">
            <svg width="32" height="22" viewBox="0 0 32 22">
              <path d="M1 11C8 1 24 1 31 11C24 21 8 21 1 11z" fill="none" stroke="#8a8a8a" strokeWidth="2" />
              <circle cx="16" cy="11" r="5" fill="none" stroke="#8a8a8a" strokeWidth="2.5" />
            </svg>
            <span className="ml-[36px] text-[18.5px] font-bold text-[#989898] whitespace-nowrap">Canvas Renderer</span>
            <CompIcons />
          </div>
          <Divider />
          <CompHeader title="Image (Script)" check className="h-[33px]" icon={<CheckerIcon size="big" />} />
          <Row label="Source Image">
            <ObjField
              label="UISprite"
              icon={<div className="w-[22px] h-[22px] border border-[#5a8aa8] flex items-center justify-center shrink-0"><div className="w-[6px] h-[6px] rounded-full border border-[#5a8aa8]" /></div>}
            />
          </Row>
          <Row label="Color"><ColorField fill="bg-white" /></Row>
          <Row label="Material"><ObjField label="None (Material)" /></Row>
          <Row label="Raycast Target"><Check /></Row>
          <Row label="Image Type"><Dropdown label="Sliced" className="w-[260px]" /></Row>
          <Row label="Fill Center" indent><Check /></Row>
          <div className="h-[7px] shrink-0" />
          <Divider />
          <CompHeader
            title="Button (Script)"
            check
            className="h-[32px]"
            icon={<div className="w-[30px] h-[30px] rounded-full bg-[#b5b5b5] border-2 border-[#c98710] text-[13px] text-[#555] flex items-center justify-center">OK</div>}
          />
          <Row label="Interactable"><Check /></Row>
          <Row label="Transition"><Dropdown label="Color Tint" className="w-[260px]" /></Row>
          <Row label="Target Graphic" indent><ObjField label="ButtonO (Image)" icon={<CheckerIcon size="small" />} /></Row>
          <Row label="Normal Color" indent><ColorField fill="bg-white" /></Row>
          <Row label="Highlighted Color" indent><ColorField fill="bg-[#f5f5f5]" /></Row>
          <Row label="Pressed Color" indent><ColorField fill="bg-[#c8c8c8]" /></Row>
          <Row label="Disabled Color" indent>
            <ColorField
              fill="bg-[#c8c8c8]"
              bottom={
                <div className="absolute bottom-0 left-0 right-0 h-[5px] flex">
                  <div className="w-1/2 bg-white" />
                  <div className="w-1/2 bg-black" />
                </div>
              }
            />
          </Row>
          <Row label="Color Multiplier" indent>
            <div className="relative w-[155px] h-[10px] rounded-full bg-[#252525]">
              <div className="absolute -left-[2px] -top-[5px] w-[20px] h-[20px] rounded-full bg-[#4c4c4c] border border-[#222]" />
            </div>
            <Num value="1" className="ml-[10px] w-[99px]" />
          </Row>
          <Row label="Fade Duration" indent><Num value="0.1" className="w-[264px]" /></Row>
          <div className="h-[16px] shrink-0" />
          <Row label="Navigation"><Dropdown label="Automatic" className="w-[260px]" /></Row>
          <div className={`${btn} ml-[268px] mt-[9px] w-[260px] h-[30px] rounded-[5px] shrink-0 flex items-center justify-center text-[17px] tracking-[0.4px] text-[#8f8f8f]`}>Visualize</div>
          <OnClick />
          <div className="h-[18px] shrink-0 border-b-2 border-[#191919]" />
          <div className="flex-1 relative flex pl-[30px] pt-[10px] pr-[4px]">
            <ArrowRight className="absolute left-[8px] bottom-[8px]" />
            <div className="w-[64px] h-[64px] bg-[#3a3a3a]" />
            <div className="flex-1 pl-[16px]">
              <div className="flex items-center h-[28px] pt-[3px] text-[21px] text-[#8f8f8f]">
                Default UI Material
                <CompIcons />
              </div>
              <div className="flex items-center mt-[11px]">
                <span className="w-[97px] text-[20px] text-[#636363]">Shader</span>
                <div className="w-[314px] h-[28px] rounded-[5px] bg-[#363636] border border-[#2a2a2a] flex items-center justify-between px-[10px] text-[17px] text-[#666]">
                  UI/Default
                  <Caret />
                </div>
              </div>
            </div>
          </div>
        </div>
        <div className="flex-1 bg-[#262626] border-l border-[#1b1b1b] relative flex flex-col items-center pt-[12px]">
          <svg width="20" height="14" viewBox="0 0 20 14"><polygon points="10,0 20,14 0,14" fill="#111" /></svg>
          <div className="mt-[38px] w-[22px] h-[1235px] rounded-full bg-gradient-to-r from-[#3d3d3d] to-[#333]" />
          <svg width="20" height="14" viewBox="0 0 20 14" className="absolute bottom-[8px]"><polygon points="0,0 20,0 10,14" fill="#111" /></svg>
        </div>
      </div>
      <div className="h-[31px] shrink-0 bg-[#2f2f2f] border-t-2 border-[#1c1c1c] flex items-center pl-[10px]">
        <div className="h-full pl-[7px] pr-[6px] border-x border-[#1f1f1f] flex items-center gap-[10px] text-[20px] font-bold text-[#c8c8c8]">
          ButtonO
          <UpDown />
        </div>
        <div className="ml-[7px] w-[415px] h-[8px] border-y-2 border-[#111]" />
      </div>
    </div>
  );
}

function StatusBar() {
  return (
    <div className="h-[45px] shrink-0 flex items-center bg-[#212121] relative">
      <div className="ml-[7px] w-[24px] h-[28px] rounded-full bg-[#c0c0c0] flex items-center justify-center text-[#333] text-[20px] font-bold">!</div>
      <span className="ml-[9px] text-[21.3px] text-[#8d8d8d] whitespace-nowrap">[Rider] [Info] Rider plugin initialized. You may change the amount of Rider Debug output via Edit -&gt; Preferences -&gt; Rider -&gt; Logging Level</span>
      <div className="absolute left-[2134px] top-[5px] w-[371px] h-[34px] bg-[#292929] border-l-[4px] border-[#1d3a6b] flex items-center justify-center text-[17.5px] text-[#8d8d8d] tracking-[0.4px]">Bake paused in play mode</div>
    </div>
  );
}

export default function App() {
  return (
    <div className="w-[2560px] h-[1600px] overflow-hidden flex flex-col bg-[#212121] font-['DejaVu_Sans',sans-serif]">
      <Toolbar />
      <div className="h-[1491px] shrink-0 flex">
        <LeftColumn />
        <Hierarchy />
        <Project />
        <Inspector />
      </div>
      <StatusBar />
    </div>
  );
}
